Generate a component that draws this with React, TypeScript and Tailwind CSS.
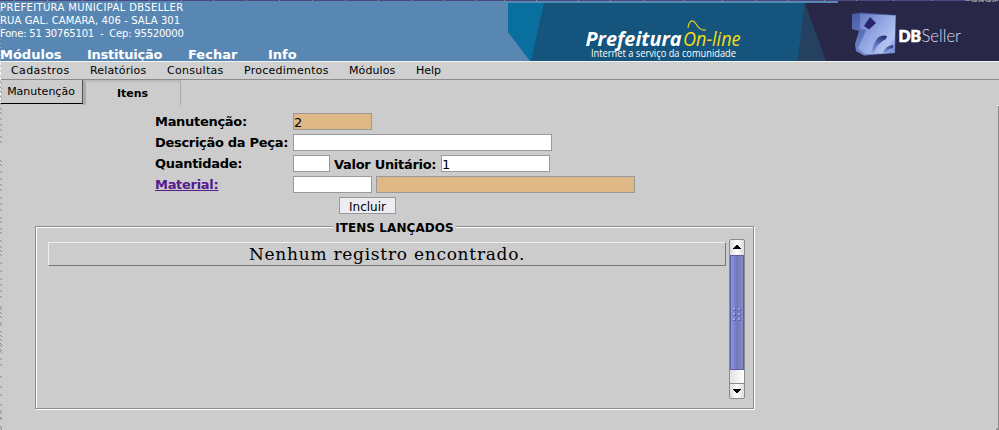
import React from "react";

const address = [
  { text: "PREFEITURA MUNICIPAL DBSELLER", tracking: "tracking-[0.36px]" },
  { text: "RUA GAL. CAMARA, 406 - SALA 301", tracking: "tracking-[0.1px]" },
  { text: "Fone: 51 30765101  -  Cep: 95520000", tracking: "tracking-[-0.2px]" },
];

const topMenu = [
  { label: "Módulos", width: "w-[87px]" },
  { label: "Instituição", width: "w-[101px] tracking-[-0.25px]" },
  { label: "Fechar", width: "w-[80px]" },
  { label: "Info", width: "w-[60px]" },
];

const subMenu = [
  { label: "Cadastros", width: "w-[79px] tracking-[0.4px]" },
  { label: "Relatórios", width: "w-[77px] tracking-[0.15px]" },
  { label: "Consultas", width: "w-[77px] tracking-[0.3px]" },
  { label: "Procedimentos", width: "w-[105px] tracking-[0.25px]" },
  { label: "Módulos", width: "w-[67px] tracking-[0.1px]" },
  { label: "Help", width: "w-[60px]" },
];

const grain = [
  82, 87, 91, 96, 103, 108, 112, 118, 124, 129, 136, 141, 160, 164, 171, 178, 184, 189, 197, 203, 209,
  217, 221, 228, 232, 240, 246, 250, 254, 262, 270, 278, 284, 290, 296, 306, 308, 312, 316, 322, 324, 331, 335, 339,
  343, 345, 349, 351, 358, 364, 376, 386, 394, 404, 410, 412, 417, 418, 426, 428,
];

const ticks = [14, 47, 82, 116, 149, 181, 213, 246, 279, 312, 345, 378, 411, 444, 476, 504, 536, 578, 610, 644, 684, 722, 756, 788, 824, 856, 893, 931];

function Banner() {
  return (
    <svg className="block shrink-0" width="491" height="61" viewBox="0 0 491 61">
      <defs>
        <linearGradient id="cube" x1="0" y1="0" x2="1" y2="0.8">
          <stop offset="0" stopColor="#6377c0" />
          <stop offset="0.5" stopColor="#93a8e2" />
          <stop offset="0.85" stopColor="#b4c4f0" />
          <stop offset="1" stopColor="#7d92d8" />
        </linearGradient>
        <linearGradient id="side" x1="0" y1="0" x2="0" y2="1">
          <stop offset="0" stopColor="#4a5aa4" />
          <stop offset="1" stopColor="#6f88d0" />
        </linearGradient>
        <linearGradient id="shade" x1="0.7" y1="0" x2="0.3" y2="1">
          <stop offset="0" stopColor="#2a3274" />
          <stop offset="0.6" stopColor="#6579c4" />
          <stop offset="1" stopColor="#8a9fdf" />
        </linearGradient>
      </defs>
      <rect width="491" height="61" fill="#15547c" />
      <path d="M0 3H36L23 61H22L0 32Z" fill="#086f9f" />
      <path d="M0 32L22 61H0Z" fill="#5987b4" />
      <path d="M297 3H491V61H290Z" fill="#282747" />
      <path d="M297 3L318 61H290Z" fill="#24415f" />
      <rect width="330" height="3" fill="#5987b4" />
      <rect x="330" width="161" height="3" fill="#282747" />
      <text x="77.5" y="46" fill="#fff" fontFamily="Open Sans" fontWeight="700" fontStyle="italic" fontSize="20" textLength="96" lengthAdjust="spacingAndGlyphs">Prefeitura</text>
      <text x="175" y="46" fill="#f4dd13" fontFamily="Open Sans" fontStyle="italic" fontSize="20" textLength="57.500" lengthAdjust="spacingAndGlyphs">On-line</text>
      <path d="M180 28C181 20 185 19 188 24S194 31 198 30" fill="none" stroke="#e9cf18" strokeWidth="1.2" />
      <text x="83" y="56.5" fill="#fff" fontFamily="Open Sans" fontSize="10" textLength="145" lengthAdjust="spacingAndGlyphs">Internet a serviço da comunidade</text>
      <path d="M344 14L353 12.500L388 15L387 53L356 55.500L348 51L347 44L351 31L344 29Z" fill="url(#side)" />
      <path d="M352 14L387.500 15.500L386.500 53L357 54L350 48L355 37L358 30L352 29Z" fill="url(#cube)" />
      <path d="M362 17L368 23L361 29.500L356 26Z" fill="#2a2470" />
      <path d="M379 36Q371 34 367 42Q364 47 363 52L366 53Q369 43 378 39Z" fill="url(#shade)" />
      <path d="M385 45Q377 46 375 53L378 53Q380 49 385 48Z" fill="url(#shade)" />
      <text x="390.500" y="42" fill="#fff" stroke="#fff" strokeWidth=".7" fontFamily="Lato" fontWeight="900" fontSize="17" textLength="22.500" lengthAdjust="spacingAndGlyphs">DB</text>
      <text x="413.500" y="42" fill="#dcdce8" fontFamily="Lato" fontWeight="300" fontSize="17" textLength="39.500" lengthAdjust="spacingAndGlyphs">Seller</text>
    </svg>
  );
}

function ScrollBar() {
  return (
    <div className="flex h-[160px] w-[16px] shrink-0 flex-col overflow-hidden rounded-[2px] border border-[#8b8b8b]">
      <div className="flex h-[15px] shrink-0 items-center justify-center bg-linear-to-r from-[#ddd] via-white to-[#ddd] pb-px">
        <svg width="8" height="4" shapeRendering="crispEdges"><path d="M3 0h2v1h1v1h1v1h1v1H0V3h1V2h1V1h1z" /></svg>
      </div>
      <div className="flex h-[115px] shrink-0 items-center justify-center border border-[#5a5fa4] bg-linear-to-r from-[#8f93ec] via-[#7278b5] to-[#858ad0]">
        <svg className="mt-[3px]" width="8" height="13" shapeRendering="crispEdges">
          {[0, 5, 10].map((y) =>
            [0, 5].map((x) => (
              <g key={`${x}-${y}`}>
                <path d={`M${x} ${y}h3v3h-3z`} fill="#5e64ac" />
                <path d={`M${x} ${y}h2v2h-2z`} fill="#a0a4e8" />
              </g>
            )),
          )}
        </svg>
      </div>
      <div className="h-[13px] shrink-0 bg-linear-to-r from-[#e2e2e2] to-white" />
      <div className="flex h-[15px] shrink-0 items-center justify-center border-t border-[#8b8b8b] bg-linear-to-r from-[#ddd] via-white to-[#ddd]">
        <svg width="8" height="4" shapeRendering="crispEdges"><path d="M0 0h8v1H7v1H6v1H5v1H3V3H2V2H1V1H0z" /></svg>
      </div>
    </div>
  );
}

const field = "h-[17px] border border-[#999] px-0 pt-[2px] text-[13px] leading-[15px] outline-none";

export default function App() {
  return (
    <div className="relative h-[430px] w-[999px] overflow-hidden bg-[#ccc] font-['DejaVu_Sans',sans-serif] text-black">
      <header className="flex h-[61px] bg-[#5987b4] text-white">
        <div className="flex w-[508px] flex-col">
          <div className="h-[46px] pt-px text-[10px] leading-[13px] whitespace-pre">
            {address.map((line) => <p key={line.text} className={line.tracking}>{line.text}</p>)}
          </div>
          <nav className="flex h-[15px] text-[13px] leading-[18px] font-bold">
            {topMenu.map((m) => <span key={m.label} className={m.width}>{m.label}</span>)}
          </nav>
        </div>
        <Banner />
      </header>
      <nav className="flex h-[19px] border-t border-b border-t-[#f4f4f4] border-b-[#8c8c8c] bg-[#d0d0d0] pl-[11px] text-[11px] leading-[17px]">
        {subMenu.map((m) => <span key={m.label} className={m.width}>{m.label}</span>)}
      </nav>
      <div className="flex h-[27px]">
        <div className="h-[24px] w-[83px] border-r border-b border-r-[#555] border-b-black text-center text-[11px] leading-[23px]">Manutenção</div>
        <div className="h-[25px] w-[98px] border-t-2 border-r border-l-3 border-t-[#bbb] border-r-[#aaa] border-l-[#aaa] pr-px text-center text-[11px] leading-[23px] font-bold">Itens</div>
      </div>
      <main>
        <form className="ml-[155px] flex flex-col pt-[6px] text-[13px] font-bold">
          <div className="flex h-[21px]">
            <label className="w-[138px] leading-[17px] tracking-[-0.3px]">Manutenção:</label>
            <input className={`${field} w-[79px] bg-[#deb887] font-normal`} defaultValue="2" />
          </div>
          <div className="flex h-[21px]">
            <label className="w-[138px] leading-[17px] tracking-[-0.3px] whitespace-nowrap">Descrição da Peça:</label>
            <input className={`${field} w-[259px] bg-white`} />
          </div>
          <div className="flex h-[21px]">
            <label className="w-[138px] leading-[17px] tracking-[-0.3px]">Quantidade:</label>
            <input className={`${field} w-[37px] bg-white`} />
            <label className="ml-[4px] w-[107px] leading-[19px] tracking-[-0.3px] whitespace-nowrap">Valor Unitário:</label>
            <input className={`${field} w-[109px] bg-white font-normal`} defaultValue="1" />
          </div>
          <div className="flex h-[21px]">
            <label className="w-[138px] leading-[17px] tracking-[-0.3px] text-[#551a8b] underline">Material:</label>
            <input className={`${field} w-[79px] bg-white`} />
            <input className={`${field} ml-[4px] w-[259px] bg-[#deb887]`} />
          </div>
          <button type="button" className="ml-[184px] h-[17px] w-[57px] border border-[#999] bg-[#ececf2] pt-[2px] text-[12px] leading-[15px] font-normal">Incluir</button>
        </form>
        <fieldset className="mt-[5px] ml-[35px] h-[190px] w-[719px] border border-[#8b8b8b] shadow-[1px_1px_0_#fff,inset_1px_1px_0_#fff]">
          <legend className="mx-auto bg-[#ccc] px-[2px] pt-[3px] text-[12px] leading-[12px] font-bold tracking-[0.07px]">ITENS LANÇADOS</legend>
          <div className="flex pt-[5px] pl-[12px]">
            <div className="mt-[3px] h-[24px] w-[678px] border border-t-[#eee] border-r-[#777] border-b-[#777] border-l-[#eee] text-center font-['DejaVu_Serif',serif] text-[17px] leading-[23px] tracking-[0.74px]">Nenhum registro encontrado.</div>
            <div className="ml-[3px]"><ScrollBar /></div>
          </div>
        </fieldset>
      </main>
      <svg className="pointer-events-none absolute top-0 left-0" width="999" height="430" shapeRendering="crispEdges">
        <rect width="999" height="1" fill="#4a4880" />
        <path d={ticks.map((x) => `M${x} 0h1v1h-1z`).join("")} fill="#8a8a80" />
        <path d="M965 .5h33M972 1.500h24" stroke="#85858c" strokeDasharray="5 1 2 1 3 2" />
        <path d="M.5 62V104" stroke="#f2f2f2" strokeDasharray="3 2" />
        <path d="M.5 3V60" stroke="#a0a8b0" strokeDasharray="1 3" />
        <path d={grain.map((y) => `M0 ${y}h1v1h-1zM1 ${y + 1}h1v1h-1z`).join("")} fill="#8b8b8b" />
        <path d="M998.500 106V430M997 428.500h1M996 429.500h2" stroke="#8b8b8b" />
        <path d="M998 105.500h1" stroke="#fff" />
      </svg>
    </div>
  );
}
